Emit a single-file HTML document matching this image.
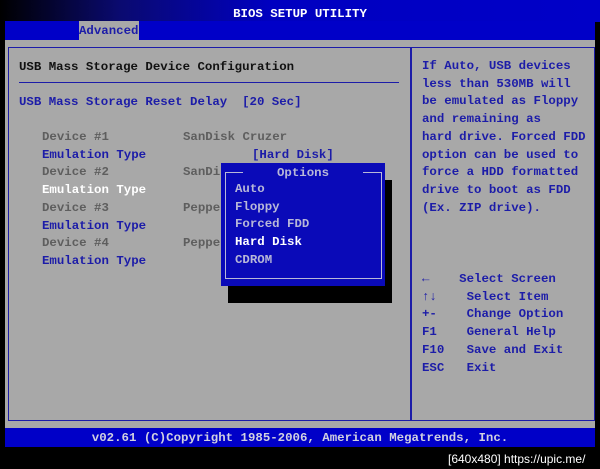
<!DOCTYPE html><html><head><style>
*{margin:0;padding:0}
body{width:600px;height:469px;background:#000;position:relative;overflow:hidden;font-family:"Liberation Mono","DejaVu Sans Mono",monospace;font-size:12.4px;font-weight:bold}
.a{position:absolute;white-space:pre;line-height:18px}
.b{color:#1c1ca8}.g{color:#5e5e5e}.w{color:#fff}.o{color:#b8b8d8}
</style></head><body>
<div class="a" style="left:0;top:0;width:600px;height:22px;background:linear-gradient(90deg,#000 0%,#0a0a70 20%,#0000c0 45%,#0000c8 100%)"></div>
<div class="a w" style="left:0;top:5px;width:600px;text-align:center">BIOS SETUP UTILITY</div>
<div class="a" style="left:5px;top:21px;width:590px;height:19px;background:#0000c8"></div>
<div class="a" style="left:79px;top:21px;width:60px;height:19px;background:#a8a8a8"></div>
<div class="a b" style="left:79px;top:22px">Advanced</div>
<div class="a" style="left:5px;top:40px;width:590px;height:388px;background:#a8a8a8"></div>
<div class="a" style="left:8px;top:47px;width:401px;height:372px;border:1px solid #1c1ca8"></div>
<div class="a" style="left:410px;top:47px;width:182px;height:372px;border:1px solid #1c1ca8;border-left:2px solid #1c1ca8"></div>
<div class="a" style="left:19px;top:82px;width:380px;height:1px;background:#1c1ca8"></div>
<div class="a" style="left:19px;top:58px;color:#111">USB Mass Storage Device Configuration</div>
<div class="a b" style="left:19px;top:93px">USB Mass Storage Reset Delay  [20 Sec]</div>
<div class="a" style="left:42px;top:129px;line-height:17.7px"><span class="g">Device #1</span>
<span class="b">Emulation Type</span>
<span class="g">Device #2</span>
<span class="w">Emulation Type</span>
<span class="g">Device #3</span>
<span class="b">Emulation Type</span>
<span class="g">Device #4</span>
<span class="b">Emulation Type</span></div>
<div class="a g" style="left:183px;top:129px;line-height:17.7px">SanDisk Cruzer

SanDisk

Pepper

Pepper</div>
<div class="a b" style="left:252px;top:146px">[Hard Disk]</div>
<div class="a" style="left:228px;top:180px;width:164px;height:123px;background:#000"></div>
<div class="a" style="left:221px;top:163px;width:164px;height:123px;background:#0a0ab8"></div>
<div class="a" style="left:225px;top:172px;width:155px;height:106px;border:1px solid #b8b8d8;border-top:none"></div>
<div class="a" style="left:225px;top:172px;width:18px;height:1px;background:#b8b8d8"></div>
<div class="a" style="left:363px;top:172px;width:18px;height:1px;background:#b8b8d8"></div>
<div class="a o" style="left:221px;top:164px;width:164px;text-align:center">Options</div>
<div class="a" style="left:235px;top:181px;line-height:17.7px"><span class="o">Auto
Floppy
Forced FDD
</span><span class="w">Hard Disk
</span><span class="o">CDROM</span></div>
<div class="a b" style="left:422px;top:58px;line-height:17.7px">If Auto, USB devices
less than 530MB will
be emulated as Floppy
and remaining as
hard drive. Forced FDD
option can be used to
force a HDD formatted
drive to boot as FDD
(Ex. ZIP drive).</div>
<div class="a b" style="left:422px;top:271px;line-height:17.7px">←    Select Screen
↑↓    Select Item
+-    Change Option
F1    General Help
F10   Save and Exit
ESC   Exit</div>
<div class="a" style="left:5px;top:428px;width:590px;height:19px;background:#0000c8"></div>
<div class="a" style="left:0;top:429px;width:600px;text-align:center;color:#d0d0e0">v02.61 (C)Copyright 1985-2006, American Megatrends, Inc.</div>
<div class="a" style="left:448px;top:450px;color:#fff;font-family:'Liberation Sans',sans-serif;font-weight:normal;font-size:12px">[640x480] https://upic.me/</div>
</body></html>
